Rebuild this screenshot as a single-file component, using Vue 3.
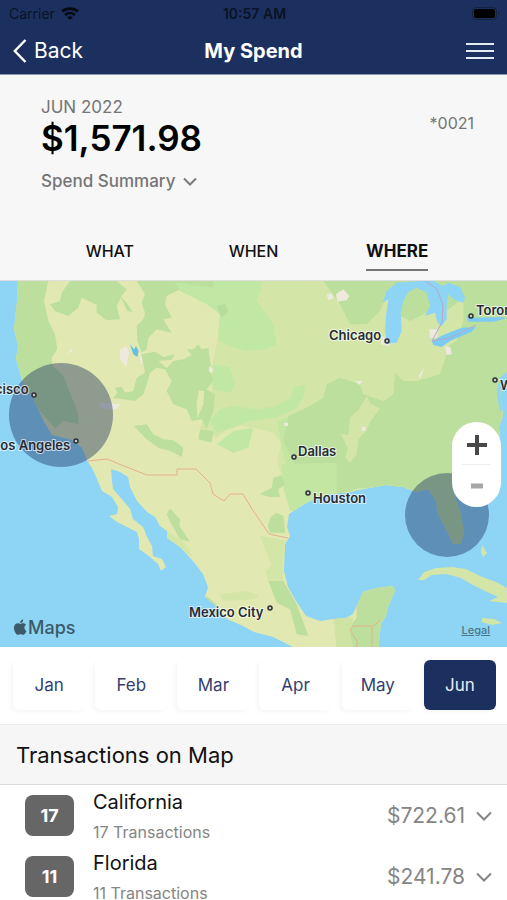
<template>
  <div class="app-screen">
    <header class="top-bar">
      <div class="status-bar">
        <div class="carrier">
          <span>Carrier</span>
          <svg width="18" height="13" viewBox="0 0 18 13" fill="none" stroke="#050914" stroke-width="2.6">
            <path d="M1 4.6C5.6.6 12.4.6 17 4.6" />
            <path d="M4 7.9c3-2.5 7-2.5 10 0" />
            <path d="M9 13 6.1 10.2c1.7-1.3 4.1-1.3 5.8 0Z" fill="#050914" stroke="none" />
          </svg>
        </div>
        <span class="clock">10:57 AM</span>
        <svg class="battery" width="28" height="13" viewBox="0 0 28 13">
          <rect x=".5" y=".5" width="24" height="12" rx="3.5" fill="none" stroke="#142241" />
          <rect x="2" y="2" width="21" height="9" rx="2" fill="#000" />
          <path d="M26 4.5c1.6.5 1.6 3.500 0 4Z" fill="#142241" />
        </svg>
      </div>
      <nav class="nav-bar">
        <button type="button" class="back-btn">
          <svg width="14" height="24" viewBox="0 0 14 24" fill="none" stroke="#fff" stroke-width="2.4">
            <path d="M12.500 1 1.800 12l10.700 11" />
          </svg>
          <span>Back</span>
        </button>
        <h1>My Spend</h1>
        <button type="button" class="menu-btn" aria-label="Menu">
          <svg width="28" height="16" viewBox="0 0 28 16" stroke="#e6eaf3" stroke-width="2">
            <path d="M0 1h28M0 8h28M0 15h28" />
          </svg>
        </button>
      </nav>
    </header>

    <section class="summary">
      <div class="summary-row">
        <div>
          <p class="period">JUN 2022</p>
          <p class="total">$1,571.98</p>
          <button type="button" class="summary-btn">
            <span>Spend Summary</span>
            <svg width="14" height="9" viewBox="0 0 14 9" fill="none" stroke="#7a7a7a" stroke-width="2">
              <path d="m1 1.500 6 6 6-6" />
            </svg>
          </button>
        </div>
        <span class="account">*0021</span>
      </div>
      <div class="tabs">
        <button
          v-for="tab in tabs"
          :key="tab"
          type="button"
          :class="{ active: tab === activeTab }"
          @click="activeTab = tab"
        >
          <span>{{ tab }}</span>
        </button>
      </div>
    </section>

    <section class="map">
      <svg class="map-canvas" viewBox="0 0 507 366">
        <rect width="507" height="366" fill="#8dd4f5" />
        <defs>
          <clipPath id="land">
            <path :d="mainland" />
          </clipPath>
        </defs>
        <path :d="mainland" fill="#e2e8b1" />

        <g clip-path="url(#land)">
          <g transform="scale(.33333)">
            <!-- Plains and eastern forests -->
            <path d="M640 0H1521V640H1180L1060 690 960 700 860 620 830 540 845 490 820 455 760 440 700 430 650 470 600 440 640 350 630 280 650 190 660 90Z" fill="#d3e6a7" />
            <path d="M630 0H790L770 60 820 130 830 190 800 205 740 210 700 200 655 180 660 100 620 70 540 30 510 0Z" fill="#c0e8a4" />
            <path d="M640 250 690 260 705 310 690 335 640 325ZM630 420 660 385 700 375 770 385 830 375 870 350 880 320 915 310 910 350 890 380 830 410 750 420 700 440 650 455ZM650 490 700 450 760 440 745 500 700 515ZM700 10 720 90 690 110Z" fill="#c0e8a4" />
            <path d="M830 420 900 400 940 500 1010 540 1060 640 990 680 910 680 870 590 850 520Z" fill="#c3e6a2" />
            <path d="M970 0H1521V800H1300L1240 650 1160 625 1080 620 1020 640 930 610 880 540 850 480 865 405 920 380 970 350 980 310 1020 290 1080 310 1090 340 1150 360 1180 340 1185 275 1210 300 1250 300 1320 280 1340 220 1350 190 1335 80 1150 120 1100 130 1050 130 1020 70Z" fill="#bcdf9e" />
            <path d="M1160 40 1140 90 1100 130 1110 190 1200 220 1310 210 1370 180 1390 120 1390 50 1340 90 1310 90 1270 140 1230 130 1210 160 1200 130 1200 40Z" fill="#d3e6a7" />
            <path d="M1200 55 1240 25 1290 50 1290 90 1230 120 1205 105Z" fill="#bcdf9e" />
            <path d="M1100 345 1112 368 1140 382 1112 420 1098 450 1075 475 1070 520 1050 545 1036 530 1043 500 1022 458 1045 462 1050 410 1075 388Z" fill="#d3e6a7" />

            <!-- Pacific coast, Sierra Nevada and the Rockies -->
            <path d="M40 0H145L132 60 145 120 165 160 172 205 155 230 158 255 190 285 212 340 235 400 235 430 190 420 165 442 120 390 60 300 30 200Z" fill="#bcdf9e" />
            <path d="M210 0 185 35 180 60 150 70 165 90 205 105 235 80 245 50 265 60 290 72 290 95 320 118 360 115 350 75 365 45 380 25 350 0ZM410 0 435 40 425 65 435 95 430 115 410 135 412 180 425 215 440 205 445 170 470 145 515 155 490 115 515 110 495 70 500 45 540 25 520 0Z" fill="#bcdf9e" />
            <path d="M360 45 380 65 398 94 382 90ZM500 0H640L640 20 580 12Z" fill="#bcdf9e" />
            <path d="M425 220 465 212 490 228 525 220 515 236 475 240 500 262 520 240 550 235 575 222 560 205 580 205 595 190 605 205 625 200 632 250 640 300 620 325 645 340 640 390 620 445 605 415 575 420 560 385 520 370 500 330 515 300 495 265 470 260 450 275 440 310 430 340 405 360 340 350 352 335 345 320 365 318 375 335 400 330 410 290 435 275Z" fill="#bcdf9e" />
            <path d="M596 328 612 330 610 370 592 412 590 370Z" fill="#e2e8b1" />
            <path d="M402 435 440 430 460 460 490 475 520 478 550 500 545 528 510 510 475 500 440 475ZM600 445 640 450 635 485 595 475Z" fill="#bcdf9e" />
            <path d="M650 75 675 68 685 90 665 110Z" fill="#b6dc9c" />

            <!-- Mexico and the Gulf plain -->
            <path d="M510 682 540 715 538 735 552 755 570 782 540 775 512 725 500 700ZM620 945 655 975 640 990 615 965Z" fill="#bcdf9e" />
            <path d="M500 750 550 780 580 830 540 805 495 775ZM660 940 740 930 780 945 760 955 670 960Z" fill="#d3e6a7" />
            <path d="M845 550 1010 545 1010 640 910 665 890 690 870 690 850 620Z" fill="#c3e6a2" />
            <path d="M778 640 815 620 820 590 845 582 855 610 835 625 840 648 810 648ZM803 735 812 708 830 695 850 705 856 755 810 755Z" fill="#bcdf9e" />
            <path d="M805 900 850 900 890 970 925 1065 890 1060 870 985 830 965ZM1070 930 1200 890V1101H1060L1040 1050 1070 1010Z" fill="#bcdf9e" />
            <path d="M780 765 870 780 850 820 850 900 805 900 797 870 815 855Z" fill="#d3e6a7" />
            <path d="M1000 1010 1060 1010 1050 1060 1060 1101H1010Z" fill="#cfe4a3" />

            <!-- Salt flats and cities -->
            <path d="M360 205 378 195 388 215 378 258 360 235ZM415 200 428 245 422 250ZM200 222 215 200 217 210ZM628 255 640 265 635 278 626 270ZM980 40 995 37 1000 52 985 58ZM1008 40 1030 25 1048 45 1040 58 1012 62ZM1145 165 1178 185 1165 195 1142 190ZM1288 145 1315 145 1310 170 1290 170ZM1335 195 1352 200 1355 220 1340 222ZM1255 285 1272 262 1262 292ZM1065 300 1088 300 1078 312ZM1085 437h12v12h-12ZM853 425h11v10h-11ZM300 365 360 370 350 385 302 382Z" fill="#eee9dd" />
            <path d="M390 190 402 205 408 195 416 210 412 228 400 220Z" fill="#65bfe7" />

            <!-- Great Lakes -->
            <path d="M1148 65 1160 30 1190 5 1260 0 1300 0 1330 15 1345 5 1380 18 1395 50 1390 65 1365 58 1345 40 1340 75 1340 115 1325 135 1312 125 1305 95 1275 105 1290 75 1280 35 1250 20 1225 32 1210 60 1202 95 1205 150 1190 185 1162 188 1155 150 1158 105 1165 55Z" fill="#8dd4f5" />
            <path d="M1295 180 1330 162 1385 140 1428 138 1415 152 1350 180 1325 198 1300 192ZM1400 105 1430 110 1500 108 1521 112 1480 122 1405 122Z" fill="#7dcbf2" />
            <path d="M1490 330 1500 290 1521 272V300L1507 340 1521 380 1500 390Z" fill="#8dd4f5" />
          </g>
        </g>

        <!-- Cuba and the Bahamas -->
        <path d="M418 299l6-8 12-4 16-1 14 2 14 7 16 6 11 6v15l-18-2 9-4-13-6-14-7-10-6-15-4-14 1-8 5ZM482 264l5 8-4 4-2-5ZM482 337l12 1 8 4-10 2-10-3Z" fill="#d3e6a7" />

        <!-- Borders -->
        <g fill="none" stroke="#e6b08f" stroke-width="1">
          <path d="M88 180l19-2 12 5 28 11h30v-6h19l14 14 3 11 11 7 6-7h13l9 15 17 25 19 4" />
          <path d="M425 0l12 8 6 16-1 17-10 19 18-3 26-13" stroke="#b9a5cc" />
          <path d="M380 339l-6 6h-21l-3 4 7 11v6M372 346v20" />
        </g>

        <g fill="rgba(28, 48, 95, .42)">
          <circle cx="61" cy="134" r="52" />
          <circle cx="447" cy="234" r="42" />
        </g>

        <g v-for="city in cities" :key="city.name">
          <circle :cx="city.dot[0]" :cy="city.dot[1]" r="2" class="city-dot" />
          <text :x="city.x" :y="city.y" class="city-name">{{ city.name }}</text>
        </g>

        <g fill="#3c5a67">
          <g transform="translate(12.500 338.500) scale(.64)">
            <path d="M12.150 6.900c-.950 0-2.410-1.080-3.960-1.040-2.040.030-3.910 1.180-4.960 3.010-2.120 3.680-.550 9.100 1.520 12.090 1.010 1.450 2.210 3.090 3.790 3.040 1.520-.070 2.090-.990 3.940-.990 1.830 0 2.350.990 3.960.950 1.640-.030 2.680-1.480 3.680-2.950 1.160-1.690 1.640-3.320 1.660-3.410-.040-.010-3.180-1.220-3.220-4.860-.030-3.040 2.480-4.490 2.600-4.560-1.430-2.090-3.620-2.320-4.390-2.380-2-.150-3.680 1.100-4.620 1.100Z" />
            <path d="M15.530 3.830c.840-1.010 1.400-2.430 1.250-3.830-1.210.050-2.660.800-3.530 1.820-.780.900-1.450 2.340-1.270 3.710 1.340.100 2.710-.690 3.550-1.700Z" />
          </g>
          <text x="28" y="353" class="maps-name">Maps</text>
        </g>
      </svg>
      <div class="zoom-control">
        <button type="button" aria-label="Zoom in">
          <svg width="20" height="20" viewBox="0 0 20 20" stroke="#484848" stroke-width="4">
            <path d="M10 0v20M0 10h20" />
          </svg>
        </button>
        <button type="button" aria-label="Zoom out">
          <svg width="20" height="20" viewBox="0 0 20 20" stroke="#a6a6a6" stroke-width="5">
            <path d="M4 10h12" />
          </svg>
        </button>
      </div>
      <a href="#" class="legal">Legal</a>
    </section>

    <div class="months">
      <button
        v-for="month in months"
        :key="month"
        type="button"
        :class="{ active: month === activeMonth }"
        @click="activeMonth = month"
      >
        {{ month }}
      </button>
    </div>

    <h2 class="list-title">Transactions on Map</h2>
    <ul class="state-list">
      <li v-for="state in states" :key="state.name">
        <span class="badge">{{ state.count }}</span>
        <div class="state-info">
          <p class="state-name">{{ state.name }}</p>
          <p class="state-count">{{ state.count }} Transactions</p>
        </div>
        <button type="button" class="amount-btn">
          <span>{{ state.amount }}</span>
          <svg width="16" height="10" viewBox="0 0 16 10" fill="none" stroke="#858585" stroke-width="2">
            <path d="m1 1.500 7 7 7-7" />
          </svg>
        </button>
      </li>
    </ul>
  </div>
</template>

<script setup>
import { ref } from 'vue';

const tabs = ['WHAT', 'WHEN', 'WHERE'];
const activeTab = ref('WHERE');

const months = ['Jan', 'Feb', 'Mar', 'Apr', 'May', 'Jun'];
const activeMonth = ref('Jun');

const states = [
  { name: 'California', count: 17, amount: '$722.61' },
  { name: 'Florida', count: 11, amount: '$241.78' },
];

// Label position is the text baseline start, dot is the city marker
const cities = [
  { name: 'San Francisco', x: -60, y: 113, dot: [34, 114] },
  { name: 'Los Angeles', x: -7, y: 169, dot: [76, 160] },
  { name: 'Chicago', x: 329, y: 59, dot: [387, 60] },
  { name: 'Toronto', x: 476, y: 34, dot: [471, 35] },
  { name: 'Washington', x: 500, y: 109, dot: [495, 99] },
  { name: 'Dallas', x: 298, y: 175, dot: [294, 176] },
  { name: 'Houston', x: 313, y: 222, dot: [308, 212] },
  { name: 'Mexico City', x: 189, y: 336, dot: [270, 327] },
];

// Coastline: down the Pacific, around Baja, up the Gulf and around Florida
const mainland = `M18 0 17 20 14 48 18 65 16 78 20 92 24 105 33 117 43 139 52 154 72 159 82 167 88 181
  92 187 97 198 102 210 112 216 118 226 117 233 109 235 117 241 127 246 137 251 139 258 139 268
  150 276 158 283 161 290 166 286 162 278 153 275 152 265 147 256 143 246 133 238 130 228 120 216
  113 208 112 200 111 188 120 191 128 196 130 206 137 220 147 231 155 236 160 245 167 250 167 257
  180 266 193 280 203 293 208 306 205 316 217 326 227 338 243 345 254 351 273 356 293 366 379 366
  379 360 381 343 386 335 388 326 395 310 393 305 376 307 363 311 359 320 353 333 346 337 333 338
  320 340 306 335 296 320 288 306 284 290 285 263 290 255 287 246 289 233 303 224 310 220 330 213
  350 211 363 208 386 204 403 206 416 211 428 208 436 220 438 233 445 246 453 263 461 263 464 250
  460 230 453 210 451 193 470 175 500 170 499 145 503 135 501 120 500 105 507 98V0Z`;
</script>

<style>
body {
  margin: 0;
  background: #fff;
}
</style>

<style scoped>
.app-screen {
  font-family: Inter, "Liberation Sans", sans-serif;
  color: #111;
}
p,
h1,
h2,
ul {
  margin: 0;
  padding: 0;
}
button {
  padding: 0;
  border: none;
  background: none;
  font: inherit;
  color: inherit;
  cursor: pointer;
}
svg {
  display: block;
}

.top-bar {
  background: #1c305f;
  border-bottom: 1px solid #8d98b4;
}
.status-bar {
  display: grid;
  grid-template-columns: 1fr auto 1fr;
  align-items: center;
  height: 27px;
  padding: 0 7px 0 9px;
  font-size: 14px;
  color: #0a1226;
}
.carrier {
  display: flex;
  align-items: center;
  gap: 6px;
}
.clock {
  font-weight: 600;
}
.battery {
  justify-self: end;
}
.nav-bar {
  display: grid;
  grid-template-columns: 1fr auto 1fr;
  align-items: center;
  height: 47px;
  padding: 0 13px;
  color: #fff;
}
.back-btn {
  display: flex;
  align-items: center;
  gap: 7px;
  font-size: 21px;
}
.nav-bar h1 {
  font-size: 20px;
  font-weight: 700;
}
.menu-btn {
  justify-self: end;
}

.summary {
  background: #f7f7f7;
  border-bottom: 1px solid #dedede;
}
.summary-row {
  display: flex;
  justify-content: space-between;
  padding: 21px 33px 0 41px;
  color: #757575;
}
.period {
  font-size: 17px;
  line-height: 22px;
}
.total {
  font-size: 35px;
  line-height: 40px;
  font-weight: 600;
  color: #000;
}
.summary-btn {
  display: flex;
  align-items: center;
  gap: 8px;
  margin-top: 12px;
  font-size: 17px;
  line-height: 22px;
  font-weight: 500;
}
.account {
  padding-top: 16px;
  font-size: 16px;
  line-height: 22px;
}
.tabs {
  display: grid;
  grid-template-columns: repeat(3, 1fr);
  padding: 48px 38px 9px;
}
.tabs span {
  display: inline-block;
  padding-bottom: 7px;
  border-bottom: 2px solid transparent;
  font-size: 16px;
  line-height: 22px;
  font-weight: 500;
}
.tabs .active span {
  border-color: #757575;
  font-size: 17px;
  font-weight: 700;
}

.map {
  position: relative;
}
.map-canvas {
  width: 100%;
  height: auto;
}
.city-dot {
  fill: #c9cdbb;
  stroke: #2c3137;
  stroke-width: 1.5px;
}
.city-name {
  font-size: 13px;
  font-weight: 600;
  fill: #272b33;
  stroke: rgba(255, 255, 255, .65);
  stroke-width: 2px;
  paint-order: stroke;
}
.maps-name {
  font-size: 18px;
  font-weight: 500;
}
.zoom-control {
  position: absolute;
  right: 6px;
  bottom: 140px;
  display: flex;
  flex-direction: column;
  width: 49px;
  border-radius: 25px;
  background: #fff;
}
.zoom-control button {
  display: flex;
  justify-content: center;
  align-items: center;
  height: 43px;
}
.zoom-control button:first-child {
  height: 42px;
  padding-top: 4px;
  box-sizing: border-box;
}
.zoom-control button + button {
  margin: 0 10px;
  border-top: 1px solid #eee;
}
.legal {
  position: absolute;
  right: 17px;
  bottom: 10px;
  font-size: 11px;
  font-weight: 500;
  color: #4c7487;
}

.months {
  display: grid;
  grid-template-columns: repeat(6, 1fr);
  gap: 10px;
  padding: 13px 11px 14px 13px;
}
.months button {
  height: 50px;
  border-radius: 6px;
  background: #fff;
  box-shadow: -2px 2px 4px rgba(0, 0, 0, .04);
  font-size: 17px;
  color: #33406f;
}
.months .active {
  background: #1c305f;
  color: #e8ebf3;
}

.list-title {
  padding: 15px 16px 14px;
  background: #f6f6f6;
  border-top: 1px solid #ececec;
  border-bottom: 1px solid #dadada;
  font-size: 22px;
  line-height: 30px;
  font-weight: 400;
}
.state-list {
  list-style: none;
}
.state-list li {
  display: flex;
  align-items: center;
  height: 61px;
  padding: 0 15px 0 25px;
}
.badge {
  width: 49px;
  margin-right: 19px;
  border-radius: 8px;
  background: #666;
  color: #fff;
  font-size: 18px;
  line-height: 41px;
  font-weight: 700;
  text-align: center;
}
.state-info {
  flex: 1;
}
.state-name {
  font-size: 20px;
  line-height: 32px;
}
.state-count {
  font-size: 16px;
  line-height: 28px;
  color: #858585;
}
.amount-btn {
  display: flex;
  align-items: center;
  gap: 11px;
  font-size: 21px;
  color: #858585;
}
</style>
